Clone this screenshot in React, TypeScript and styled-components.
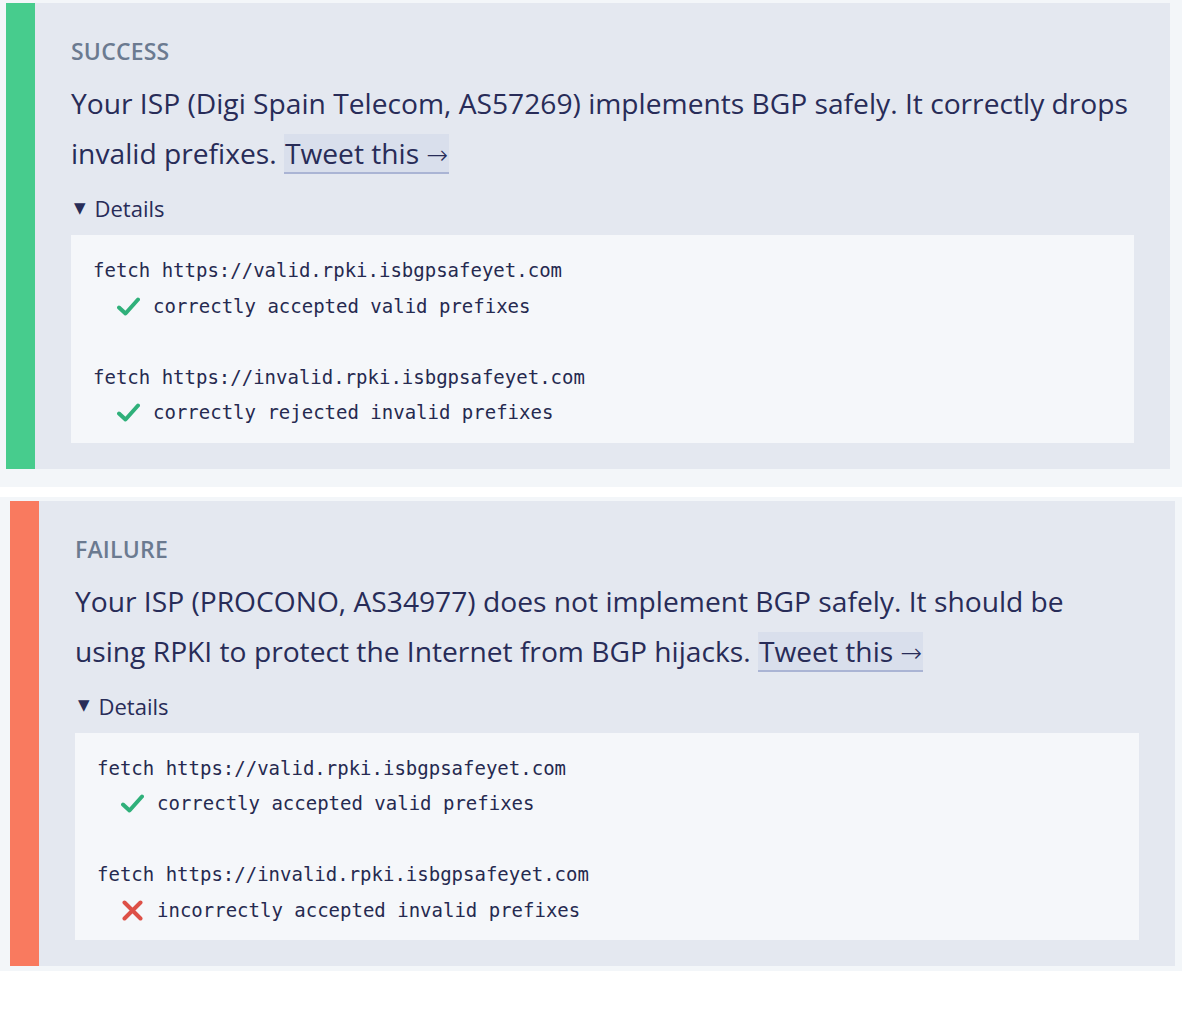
import styled, { createGlobalStyle } from "styled-components";

const GlobalStyle = createGlobalStyle`
  body {
    margin: 0;
    background: #ffffff;
    font-family: "Open Sans", "Noto Sans", sans-serif;
  }
`;

const Page = styled.div`
  display: flex;
  flex-direction: column;
  width: 1200px;
`;

const Shot = styled.section<{ $pad: string; $gap?: number }>`
  width: 1182px;
  box-sizing: border-box;
  padding: ${(p) => p.$pad};
  margin-top: ${(p) => p.$gap || 0}px;
  background: #f3f6f9;
`;

const Card = styled.div`
  display: flex;
  background: #e4e8f0;
`;

const Bar = styled.div<{ $color: string }>`
  width: 29px;
  flex-shrink: 0;
  background: ${(p) => p.$color};
`;

const Body = styled.div`
  flex: 1;
  padding: 33px 36px 26px 36px;
  color: #282c58;
`;

const Label = styled.div`
  font-size: 23px;
  line-height: 30px;
  font-weight: 600;
  color: #6b7a90;
  letter-spacing: 0.2px;
`;

const Message = styled.p`
  margin: 12px 0 0;
  font-size: 28.2px;
  line-height: 50px;
`;

const Tweet = styled.a`
  color: inherit;
  text-decoration: none;
  background: #d9dfec;
  border-bottom: 2px solid #aab4d4;
  padding: 0 1px;
`;

const Arrow = styled.span`
  font-family: "DejaVu Sans", sans-serif;
  font-weight: 300;
  font-size: 26px;
  line-height: 1;
`;

const Summary = styled.div`
  margin-top: 15px;
  display: flex;
  align-items: center;
  gap: 9px;
  padding-left: 3px;
  font-size: 22px;
  line-height: 30px;
`;

const Caret = styled.span`
  font-family: "DejaVu Sans", sans-serif;
  font-size: 15px;
  line-height: 1;
`;

const CodeBox = styled.pre`
  margin: 12px 0 0;
  padding: 18px 22px 12px;
  background: #f5f7fa;
  font-family: "DejaVu Sans Mono", "Liberation Mono", monospace;
  font-size: 19px;
  line-height: 35.5px;
  color: #262a50;
  white-space: pre;
`;

const ResultLine = styled.div`
  display: flex;
  align-items: center;
  padding-left: 24px;
  gap: 13px;
`;

const Blank = styled.div`
  height: 35.5px;
`;

const Check = () => (
  <svg width="23" height="19" viewBox="0 0 23 19">
    <path d="M2 10.5 L8.5 16.5 L21 2.5" fill="none" stroke="#2fb07a" strokeWidth="4" strokeLinecap="round" strokeLinejoin="round" />
  </svg>
);

const Cross = () => (
  <svg width="23" height="21" viewBox="0 0 23 21">
    <path d="M3.5 2.5 L19.5 18.5 M19.5 2.5 L3.5 18.5" fill="none" stroke="#dd5047" strokeWidth="4" strokeLinecap="round" />
  </svg>
);

type CheckItem = { url: string; ok: boolean; text: string };

const Result = ({
  color,
  label,
  message,
  checks,
}: {
  color: string;
  label: string;
  message: string;
  checks: CheckItem[];
}) => (
  <Card>
    <Bar $color={color} />
    <Body>
      <Label>{label}</Label>
      <Message>
        {message}{" "}
        <Tweet href="#">
          Tweet this <Arrow>→</Arrow>
        </Tweet>
      </Message>
      <Summary>
        <Caret>▼</Caret>
        Details
      </Summary>
      <CodeBox>
        {checks.map((c, i) => (
          <div key={c.url}>
            {i > 0 && <Blank />}
            <div>fetch {c.url}</div>
            <ResultLine>
              {c.ok ? <Check /> : <Cross />}
              <span>{c.text}</span>
            </ResultLine>
          </div>
        ))}
      </CodeBox>
    </Body>
  </Card>
);

export default function App() {
  return (
    <Page>
      <GlobalStyle />
      <Shot $pad="3px 12px 18px 6px">
        <Result
          color="#47cc8d"
          label="SUCCESS"
          message="Your ISP (Digi Spain Telecom, AS57269) implements BGP safely. It correctly drops invalid prefixes."
          checks={[
            { url: "https://valid.rpki.isbgpsafeyet.com", ok: true, text: "correctly accepted valid prefixes" },
            { url: "https://invalid.rpki.isbgpsafeyet.com", ok: true, text: "correctly rejected invalid prefixes" },
          ]}
        />
      </Shot>
      <Shot $pad="4px 7px 5px 10px" $gap={10}>
        <Result
          color="#f97a5f"
          label="FAILURE"
          message="Your ISP (PROCONO, AS34977) does not implement BGP safely. It should be using RPKI to protect the Internet from BGP hijacks."
          checks={[
            { url: "https://valid.rpki.isbgpsafeyet.com", ok: true, text: "correctly accepted valid prefixes" },
            { url: "https://invalid.rpki.isbgpsafeyet.com", ok: false, text: "incorrectly accepted invalid prefixes" },
          ]}
        />
      </Shot>
    </Page>
  );
}
